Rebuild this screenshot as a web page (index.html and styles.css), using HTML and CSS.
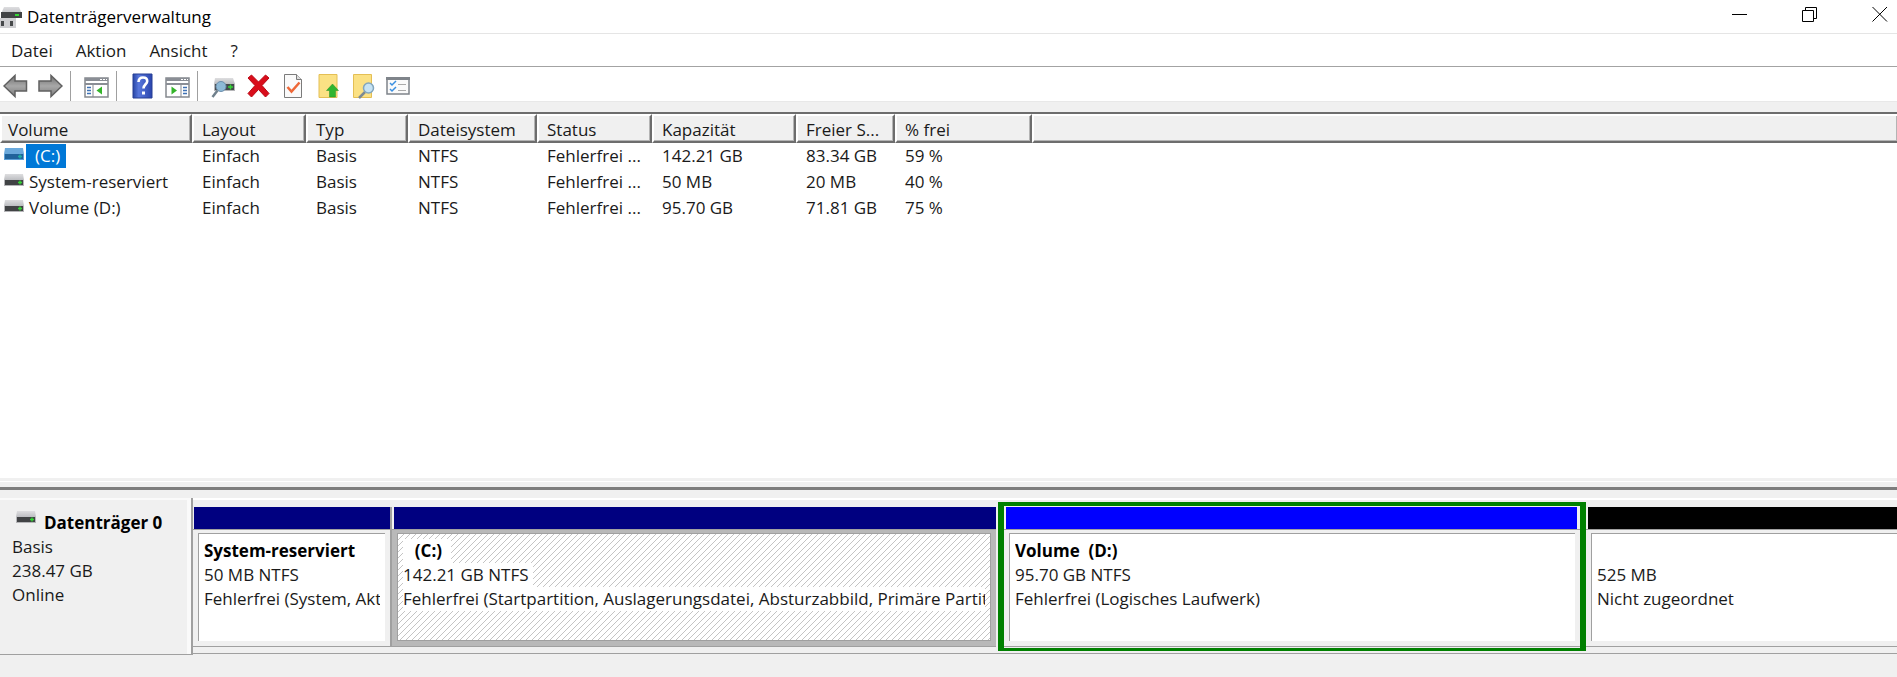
FILE: index.html
```
<!DOCTYPE html>
<html lang="de">
<head>
  <meta charset="UTF-8" />
  <meta name="viewport" content="width=device-width, initial-scale=1.0" />
  <title>Datenträgerverwaltung</title>
  <link rel="stylesheet" href="styles.css">
</head>
<body>
  <!-- shared drive icon -->
  <svg class="defs" width="0" height="0" aria-hidden="true">
    <defs>
      <linearGradient id="lid" x1="0" y1="0" x2="0" y2="1">
        <stop offset="0" stop-color="#dedee0" /><stop offset="1" stop-color="#bcbdc1" />
      </linearGradient>
      <linearGradient id="metal" x1="0" y1="0" x2="0" y2="1">
        <stop offset="0" stop-color="#6f6f6f" /><stop offset=".5" stop-color="#a8a8a8" /><stop offset="1" stop-color="#7c7c7c" />
      </linearGradient>
      <linearGradient id="help" x1="0" y1="0" x2="1" y2="0">
        <stop offset="0" stop-color="#2745a5" /><stop offset=".3" stop-color="#5877dc" /><stop offset="1" stop-color="#2a45ad" />
      </linearGradient>
    </defs>
    <symbol id="drive" viewBox="0 0 20 12">
      <path d="M1 0h18l1 6H0z" fill="url(#lid)" />
      <path d="M0 6h20v6H0z" fill="#b5b5b8" />
      <path d="M1 6h18v5H1z" fill="#414345" />
      <path d="M16 6.500v4M14 8.500h4" stroke="#35d435" stroke-width="1.400" />
    </symbol>
    <symbol id="drive-selected" viewBox="0 0 20 12">
      <path d="M1 0h18l1 6H0z" fill="#6aa9dc" />
      <path d="M0 6h20v6H0z" fill="#5a9fd8" />
      <path d="M1 6h18v5H1z" fill="#21639b" />
      <path d="M16 6.500v4M14 8.500h4" stroke="#20b0a0" stroke-width="1.400" />
    </symbol>
  </svg>

  <header class="titlebar">
    <svg class="app-icon" width="22" height="24" viewBox="0 0 22 24">
      <path d="M4 2h15l3 7H1z" fill="url(#lid)" />
      <path d="M1 7h21v6H1z" fill="#414345" />
      <path d="M15 10h4" stroke="#35d435" stroke-width="2" />
      <path d="M0 13h16v10H0z" fill="#cfcfd2" />
      <path d="M1 16h3v5H1zM10 16h3v5h-3z" fill="#47494b" />
    </svg>
    <h1>Datenträgerverwaltung</h1>
    <div class="window-buttons">
      <button aria-label="Minimieren"><svg width="16" height="16" viewBox="0 0 16 16"><path d="M0 8.500h15" /></svg></button>
      <button aria-label="Verkleinern"><svg width="16" height="16" viewBox="0 0 16 16"><path d="M.5 4.500h11v11H.5zM3.500 4.500v-3h11v11h-3" /></svg></button>
      <button aria-label="Schließen"><svg width="16" height="16" viewBox="0 0 16 16"><path d="M.5 1l14.500 14.500M15 1L.5 15.500" /></svg></button>
    </div>
  </header>

  <nav class="menu">
    <button>Datei</button>
    <button>Aktion</button>
    <button>Ansicht</button>
    <button>?</button>
  </nav>

  <div class="toolbar">
    <button aria-label="Zurück">
      <svg width="25" height="26" viewBox="0 0 25 26"><path d="M1 13L12 2.500V8h11.500v10H12v5.500z" fill="url(#metal)" stroke="#606060" stroke-width="1.500" /></svg>
    </button>
    <button aria-label="Vorwärts">
      <svg width="25" height="26" viewBox="0 0 25 26"><path d="M24 13L13 2.500V8H1v10h12v5.500z" fill="url(#metal)" stroke="#606060" stroke-width="1.500" /></svg>
    </button>
    <span class="separator"></span>
    <button aria-label="Konsolenstruktur anzeigen">
      <svg width="25" height="26" viewBox="0 0 25 26">
        <path d="M1 5h23v19H1z" fill="#fff" stroke="#85898f" stroke-width="1.500" />
        <path d="M1 5h23v3H1zM1 10h23v2H1z" fill="#8a8e95" />
        <path d="M16 6.500h2M19 6.500h2M22 6.500h1" stroke="#fff" />
        <path d="M9 12v12" stroke="#85898f" />
        <path d="M3 14.500h4M3 17.500h4M3 20.500h4" stroke="#3e72b5" stroke-width="1.500" />
        <path d="M18 13.500v8L12.500 17.500z" fill="#35b52b" />
      </svg>
    </button>
    <span class="separator"></span>
    <button aria-label="Hilfe">
      <svg width="25" height="26" viewBox="0 0 25 26">
        <path d="M3 1h19v24H3z" fill="url(#help)" stroke="#263f94" />
        <path d="M8.500 9q.3-4.500 4.500-4.500t4.200 3.700c0 3-3.700 3.300-3.700 7.300" fill="none" stroke="#fff" stroke-width="2.600" />
        <path d="M12 18.500h3v3h-3z" fill="#fff" />
      </svg>
    </button>
    <button aria-label="Aktionsbereich anzeigen">
      <svg width="25" height="26" viewBox="0 0 25 26">
        <path d="M1 5h23v19H1z" fill="#fff" stroke="#85898f" stroke-width="1.500" />
        <path d="M1 5h23v3H1zM1 10h23v2H1z" fill="#8a8e95" />
        <path d="M16 6.500h2M19 6.500h2M22 6.500h1" stroke="#fff" />
        <path d="M16 12v12" stroke="#85898f" />
        <path d="M18 14.500h4M18 17.500h4M18 20.500h4" stroke="#3e72b5" stroke-width="1.500" />
        <path d="M6.500 13.500v8l5.500-4z" fill="#35b52b" />
      </svg>
    </button>
    <span class="separator"></span>
    <button aria-label="Datenträger neu einlesen">
      <svg width="25" height="26" viewBox="0 0 25 26">
        <path d="M4 5h18l2 6H3z" fill="url(#lid)" />
        <path d="M3 11h21v7H3z" fill="#b5b5b8" />
        <path d="M4 11h19v6H4z" fill="#45494c" />
        <path d="M17 14h5M19.500 11.500v5" stroke="#35d435" stroke-width="1.500" />
        <circle cx="10" cy="13.500" r="5" fill="#8db9d6" stroke="#6c8fae" />
        <path d="M6.500 17.500L1.500 24" stroke="#70808c" stroke-width="2.500" />
      </svg>
    </button>
    <button aria-label="Löschen">
      <svg width="25" height="26" viewBox="0 0 25 26"><path d="M2 5l3.500-3 7 7 7-7L23 5l-7 7.500 7 8-3.500 3.500-7-7.500-7 7.500L2 20.500l7-8z" fill="#d90d1b" stroke="#b90815" /></svg>
    </button>
    <button aria-label="Eigenschaften">
      <svg width="25" height="26" viewBox="0 0 25 26">
        <path d="M3.500 1.500h12l5 5v18h-17z" fill="#fafafa" stroke="#7b7b7b" />
        <path d="M15.500 1.500v5h5" fill="#ddd" stroke="#7b7b7b" />
        <path d="M6.500 14l4 4.500 8-9" fill="none" stroke="#ee6838" stroke-width="2.500" />
      </svg>
    </button>
    <button aria-label="Öffnen">
      <svg width="25" height="26" viewBox="0 0 25 26">
        <path d="M3 1.500h18v23H3z" fill="#fbe184" stroke="#e4bf55" />
        <path d="M16.500 11l6 6.500h-3V24h-6v-6.500h-3z" fill="#2fb52f" stroke="#249124" stroke-width=".5" />
      </svg>
    </button>
    <button aria-label="Durchsuchen">
      <svg width="25" height="26" viewBox="0 0 25 26">
        <path d="M2.500 1.500h18v23h-18z" fill="#fbe184" stroke="#e4bf55" />
        <path d="M14 19l-6 6" stroke="#7d8a92" stroke-width="2.500" />
        <circle cx="17.500" cy="15" r="5" fill="#c6e3f4" stroke="#82a6bd" stroke-width="1.500" />
      </svg>
    </button>
    <button aria-label="Einstellungen">
      <svg width="25" height="26" viewBox="0 0 25 26">
        <path d="M1 5h22v16H1z" fill="#fafafa" stroke="#7f848a" stroke-width="1.500" />
        <path d="M0 4h24v3H0z" fill="#7f848a" />
        <path d="M4 10l2 2 4-4M4 16l2 2 4-4" fill="none" stroke="#3a8fe0" stroke-width="1.500" />
        <path d="M12 11.500h8M12 17.500h8" stroke="#aaa" />
      </svg>
    </button>
  </div>

  <main class="volumes">
    <table>
      <colgroup>
        <col class="w-volume"><col class="w-layout"><col class="w-type"><col class="w-fs"><col class="w-status">
        <col class="w-size"><col class="w-free"><col class="w-percent"><col>
      </colgroup>
      <thead>
        <tr>
          <th>Volume</th><th>Layout</th><th>Typ</th><th>Dateisystem</th><th>Status</th>
          <th>Kapazität</th><th>Freier S...</th><th>% frei</th><th></th>
        </tr>
      </thead>
      <tbody>
        <tr class="selected">
          <td><div class="name"><svg width="20" height="12"><use href="#drive-selected" /></svg><span>(C:)</span></div></td>
          <td>Einfach</td><td>Basis</td><td>NTFS</td><td>Fehlerfrei ...</td><td>142.21 GB</td><td>83.34 GB</td><td>59 %</td><td></td>
        </tr>
        <tr>
          <td><div class="name"><svg width="20" height="12"><use href="#drive" /></svg><span>System-reserviert</span></div></td>
          <td>Einfach</td><td>Basis</td><td>NTFS</td><td>Fehlerfrei ...</td><td>50 MB</td><td>20 MB</td><td>40 %</td><td></td>
        </tr>
        <tr>
          <td><div class="name"><svg width="20" height="12"><use href="#drive" /></svg><span>Volume (D:)</span></div></td>
          <td>Einfach</td><td>Basis</td><td>NTFS</td><td>Fehlerfrei ...</td><td>95.70 GB</td><td>71.81 GB</td><td>75 %</td><td></td>
        </tr>
      </tbody>
    </table>
  </main>

  <div class="splitter"></div>

  <section class="disk">
    <div class="disk-info">
      <h2><svg width="20" height="12"><use href="#drive" /></svg>Datenträger 0</h2>
      <p>Basis</p>
      <p>238.47 GB</p>
      <p>Online</p>
    </div>
    <div class="partitions">
      <div class="partition system">
        <div class="bar"></div>
        <div class="frame"><div class="box"><div class="text">
          <p><b>System-reserviert</b></p>
          <p><span>50 MB NTFS</span></p>
          <p><span>Fehlerfrei (System, Akti</span></p>
        </div></div></div>
      </div>
      <div class="partition boot">
        <div class="bar"></div>
        <div class="frame"><div class="box"><div class="text">
          <p><b>  (C:)  </b></p>
          <p><span>142.21 GB NTFS </span></p>
          <p><span>Fehlerfrei (Startpartition, Auslagerungsdatei, Absturzabbild, Primäre Partit</span></p>
        </div></div></div>
      </div>
      <div class="partition logical">
        <div class="bar"></div>
        <div class="frame"><div class="box"><div class="text">
          <p><b>Volume  (D:)</b></p>
          <p><span>95.70 GB NTFS</span></p>
          <p><span>Fehlerfrei (Logisches Laufwerk)</span></p>
        </div></div></div>
      </div>
      <div class="partition unallocated">
        <div class="bar"></div>
        <div class="frame"><div class="box"><div class="text">
          <p></p>
          <p><span>525 MB</span></p>
          <p><span>Nicht zugeordnet</span></p>
        </div></div></div>
      </div>
    </div>
  </section>
</body>
</html>
```

FILE: styles.css
```
* {
  box-sizing: border-box;
}
body {
  margin: 0;
  min-height: 100vh;
  display: flex;
  flex-direction: column;
  background: #f0f0f0;
  color: #1a1a1a;
  font-family: "Segoe UI", "Open Sans", sans-serif;
  font-size: 17px;
  line-height: 24px;
  overflow: hidden;
}
h1, h2, p {
  margin: 0;
}
button {
  border: none;
  padding: 0;
  background: none;
  font: inherit;
  color: inherit;
}
.defs {
  position: absolute;
}

/* title bar and menu */
.titlebar {
  display: flex;
  align-items: center;
  height: 34px;
  background: #fff;
  border-bottom: 1px solid #e5e5e5;
  overflow: hidden;
}
.app-icon {
  margin-right: 5px;
}
h1 {
  font-size: 17px;
  font-weight: normal;
  color: #000;
}
.window-buttons {
  display: flex;
  margin: 0 -18px 6px auto;
}
.window-buttons button {
  width: 70px;
  height: 28px;
}
.window-buttons svg {
  display: block;
  margin: auto;
  fill: none;
  stroke: #000;
}
.menu {
  display: flex;
  gap: 23px;
  height: 32px;
  padding: 2px 11px 0;
  background: #fff;
}

/* toolbar */
.toolbar {
  display: flex;
  align-items: center;
  gap: 10px;
  height: 36px;
  padding: 5px 3px 2px;
  background: #fff;
  border-top: 1px solid #a3a3a3;
  border-bottom: 1px solid #e8e8e8;
}
.toolbar svg {
  display: block;
}
.separator {
  width: 1px;
  height: 30px;
  margin: 0 3px 0 -3px;
  background: #a0a0a0;
}

/* volume list */
.volumes {
  flex: 1;
  margin-top: 10px;
  background: #fff;
  border-top: 2px solid #6d6d6d;
}
table {
  width: 100%;
  table-layout: fixed;
  border-collapse: separate;
  border-spacing: 0;
}
.w-volume { width: 192px; }
.w-layout { width: 114px; }
.w-type { width: 102px; }
.w-fs { width: 129px; }
.w-status { width: 115px; }
.w-size { width: 144px; }
.w-free { width: 99px; }
.w-percent { width: 137px; }
th, td {
  padding: 0 0 0 10px;
  text-align: left;
  font-weight: normal;
  white-space: nowrap;
}
th {
  height: 29px;
  padding: 3px 0 0 8px;
  line-height: 22px;
  background: #f0f0f0;
  border: 2px solid #fff;
  border-right-color: #6d6d6d;
  border-bottom-color: #6d6d6d;
  box-shadow: inset -1px -1px #b4b4b4;
}
th:first-child {
  padding-left: 6px;
}
th:last-child {
  border-right: none;
}
td {
  height: 26px;
}
td:first-child {
  padding-left: 4px;
}
.name {
  display: flex;
}
.name svg {
  margin-top: 4px;
}
.name span {
  margin-left: 2px;
  padding: 0 3px;
}
.selected .name span {
  padding: 0 6px 0 9px;
  background: #0078d7;
  color: #fff;
}

.splitter {
  height: 12px;
  background: #f0f0f0;
  border-top: 3px solid #f0f0f0;
  border-bottom: 3px solid #7d7d7d;
  box-shadow: inset 0 1px #fff;
}

/* graphical disk view */
.disk {
  display: flex;
  margin: 8px 0 22px;
}
.disk-info {
  width: 193px;
  padding: 13px 0 0 12px;
  border: 1px solid #a0a0a0;
  border-width: 0 2px 1px 0;
  box-shadow: inset -4px 2px #fafafa;
}
h2 {
  display: flex;
  gap: 8px;
  font-size: 17px;
  line-height: 24px;
  padding-left: 4px;
  color: #000;
}
.partitions {
  flex: 1;
  min-width: 0;
  display: grid;
  grid-template-columns: 199fr 606fr 588fr 311fr;
  margin-bottom: 1px;
  padding: 7px 0 6px;
  border-top: 2px solid #fff;
  border-bottom: 1px solid #a0a0a0;
}
.partition {
  min-width: 0;
  border-right: 2px solid #a0a0a0;
}
.bar {
  height: 22px;
  margin-left: 1px;
  background: #000080;
}
.frame {
  padding: 3px 5px 5px;
  border-top: 1px solid #a0a0a0;
  border-bottom: 1px solid #a0a0a0;
}
.box {
  height: 108px;
  padding: 5px;
  background: #fff;
  border-top: 1px solid #a0a0a0;
  border-left: 1px solid #a0a0a0;
}
.text {
  overflow: hidden;
}
.text p {
  height: 24px;
  white-space: pre;
}
.text b, .text span {
  display: inline-block;
  background: #fff;
}
.text b {
  color: #000;
}
.boot {
  border-right-color: #f0f0f0;
}
.boot .bar {
  margin-left: 2px;
}
.boot .frame {
  background: #b9b9b9;
}
.boot .box {
  border: 1px solid #a0a0a0;
  background: #fff linear-gradient(135deg, transparent 44%, #c4c4c4 44% 56%, transparent 56%) 0 0 / 6px 6px;
}
.boot b {
  padding-left: 3px;
}
.logical {
  margin: -5px 0 -4px;
  border: solid #008000;
  border-width: 4px 6px 3px;
}
.logical .bar {
  margin: 1px 3px 0 2px;
  background: #00f;
}
.unallocated {
  border-right: none;
}
.unallocated .bar {
  margin-left: 2px;
  background: #000;
}
.unallocated .frame {
  padding-right: 0;
}
```
